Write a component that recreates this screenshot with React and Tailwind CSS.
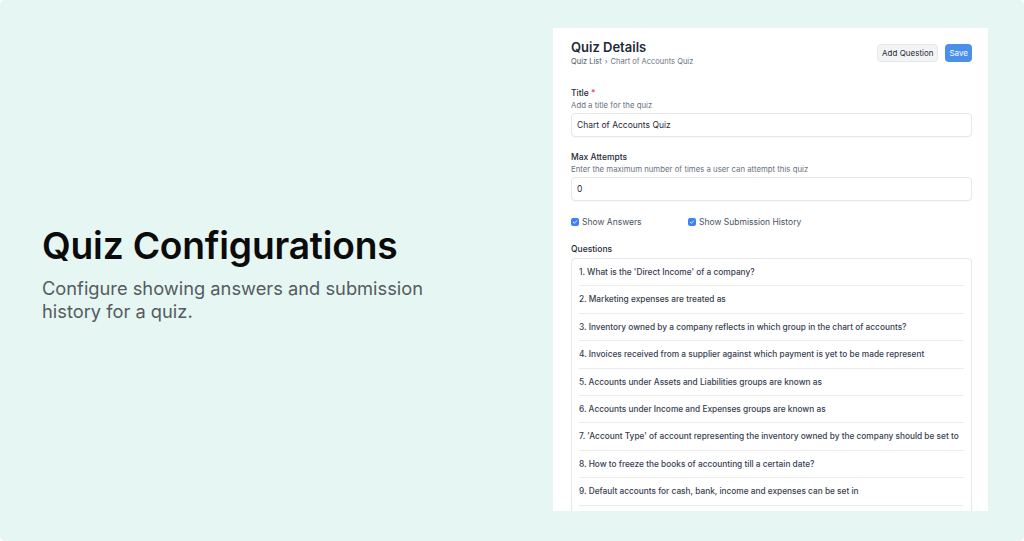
import React from 'react';

const questions = [
    "1. What is the 'Direct Income' of a company?",
    '2. Marketing expenses are treated as',
    '3. Inventory owned by a company reflects in which group in the chart of accounts?',
    '4. Invoices received from a supplier against which payment is yet to be made represent',
    '5. Accounts under Assets and Liabilities groups are known as',
    '6. Accounts under Income and Expenses groups are known as',
    "7. 'Account Type' of account representing the inventory owned by the company should be set to",
    '8. How to freeze the books of accounting till a certain date?',
    '9. Default accounts for cash, bank, income and expenses can be set in',
];

function CheckBox({ label }) {
    return (
        <label className="flex items-center gap-[3px] w-[117px]">
            <span className="w-[8px] h-[8px] rounded-[2px] bg-[#3b82f6] flex items-center justify-center">
                <svg viewBox="0 0 8 8" className="w-[6px] h-[6px]">
                    <path d="M1.6 4.2 L3.2 5.7 L6.4 2.4" fill="none" stroke="white" strokeWidth="1.1" strokeLinecap="round" strokeLinejoin="round" />
                </svg>
            </span>
            <span className="text-[8.5px] text-[#4b5563]">{label}</span>
        </label>
    );
}

function Field({ label, required, help, value }) {
    return (
        <div className="flex flex-col">
            <div className="text-[8.5px] leading-[12px] font-medium text-[#1f2937]">
                {label} {required && <span className="text-[#ef4444]">*</span>}
            </div>
            <div className="text-[7.8px] leading-[12px] text-[#6b7280]">{help}</div>
            <div className="mt-[2px] h-[24px] rounded-[4px] border border-[#e5e7eb] bg-white shadow-[0_1px_1px_rgba(0,0,0,0.03)] flex items-center px-[5px] text-[8.5px] text-[#1f2937]">
                {value}
            </div>
        </div>
    );
}

export default function App() {
    return (
        <div className="w-full h-[541px] bg-white" style={{ fontFamily: 'Inter, "Noto Sans", sans-serif' }}>
            <div className="w-full h-full bg-[#e6f6f2] rounded-[5px] flex overflow-hidden">
                {/* Left intro */}
                <div className="w-[553px] flex flex-col justify-center pl-[42px] pt-[6px]">
                    <h1 className="text-[37.2px] leading-[44px] font-semibold text-[#0b0b0b] tracking-[-0.2px]">Quiz Configurations</h1>
                    <p className="mt-[9px] text-[18.3px] leading-[23px] text-[#555b61] w-[400px]">
                        Configure showing answers and submission history for a quiz.
                    </p>
                </div>

                {/* Right panel */}
                <div className="mt-[28px] mb-[30px] w-[435px] bg-white overflow-hidden pl-[18px] pr-[16px] pt-[10px]">
                    <div className="flex items-center justify-between">
                        <div>
                            <div className="text-[13px] leading-[18px] font-semibold text-[#1f2937]">Quiz Details</div>
                            <div className="text-[7.5px] leading-[12px] text-[#6b7280] flex items-center gap-[3px]">
                                <span className="text-[#4b5563]">Quiz List</span>
                                <span>›</span>
                                <span>Chart of Accounts Quiz</span>
                            </div>
                        </div>
                        <div className="flex items-center gap-[7px]">
                            <button className="h-[18px] px-[4px] rounded-[4px] bg-[#f3f4f6] border border-[#e5e7eb] text-[8px] text-[#1f2937]">Add Question</button>
                            <button className="h-[18px] px-[4px] rounded-[4px] bg-[#4a90e8] text-[8px] text-white">Save</button>
                        </div>
                    </div>

                    <div className="mt-[19px]">
                        <Field label="Title" required help="Add a title for the quiz" value="Chart of Accounts Quiz" />
                    </div>
                    <div className="mt-[14px]">
                        <Field label="Max Attempts" help="Enter the maximum number of times a user can attempt this quiz" value="0" />
                    </div>

                    <div className="mt-[15px] flex items-center h-[12px]">
                        <CheckBox label="Show Answers" />
                        <CheckBox label="Show Submission History" />
                    </div>

                    <div className="mt-[15px] text-[8.5px] leading-[12px] font-medium text-[#1f2937]">Questions</div>
                    <div className="mt-[3px] rounded-[4px] border border-[#e5e7eb] px-[7px] pb-[20px]">
                        {questions.map((q) => (
                            <div key={q} className="h-[27.4px] border-b border-[#ececec] flex items-center text-[8.3px] font-medium text-[#374151] whitespace-nowrap">
                                {q}
                            </div>
                        ))}
                    </div>
                </div>
            </div>
        </div>
    );
}
